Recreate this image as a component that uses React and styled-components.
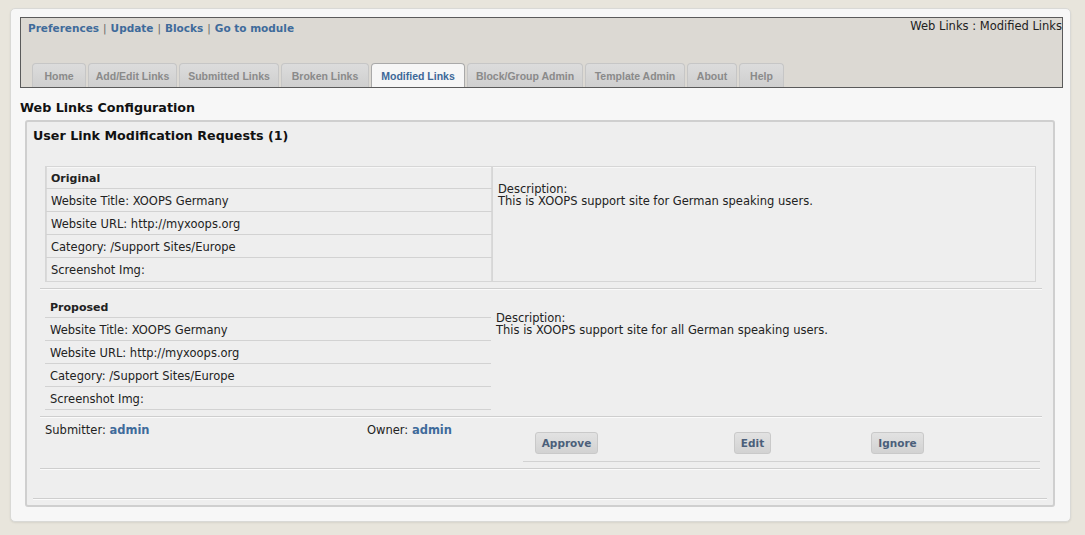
import React from "react";
import styled, { createGlobalStyle } from "styled-components";

const GlobalStyle = createGlobalStyle`
  body {
    margin: 0;
    background: #e8e5dc;
    font-family: "DejaVu Sans", Verdana, sans-serif;
    color: #222;
  }
`;

const Page = styled.div`
  padding: 8px 14px 13px 10px;
`;

const Shell = styled.div`
  width: 1061px;
  height: 514px;
  box-sizing: border-box;
  background: #f7f7f7;
  border: 1px solid #d9d9d6;
  border-radius: 5px;
  box-shadow: 0 1px 2px rgba(0, 0, 0, 0.08);
  padding: 8px 7px 0 9px;
`;

const Header = styled.div`
  width: 1043px;
  height: 71px;
  box-sizing: border-box;
  background: #dcd9d3;
  border: 1px solid #5a5a5a;
  display: flex;
  flex-direction: column;
  justify-content: space-between;
`;

const TopRow = styled.div`
  display: flex;
  justify-content: space-between;
  align-items: flex-start;
`;

const AdminLinks = styled.div`
  padding: 4px 0 0 7px;
  font-size: 10.5px;
  font-weight: bold;
  line-height: 13px;
  color: #555;
  a {
    color: #3f6b9b;
    text-decoration: none;
  }
`;

const Sep = styled.span`
  color: #666;
  font-weight: normal;
  margin: 0 4px;
`;

const Crumb = styled.div`
  padding-top: 2px;
  font-size: 11.5px;
  line-height: 13px;
  color: #222;
`;

const Tabs = styled.div`
  display: flex;
  gap: 2px;
  padding-left: 11px;
`;

const Tab = styled.div`
  width: ${(p) => p.$w}px;
  height: 24px;
  box-sizing: border-box;
  display: flex;
  align-items: center;
  justify-content: center;
  padding-top: 1px;
  font-family: "Liberation Sans", Arial, sans-serif;
  font-size: 10.5px;
  font-weight: bold;
  border: 1px solid ${(p) => (p.$active ? "#a9a9a9" : "#c6c6c6")};
  border-bottom: none;
  border-radius: 4px 4px 0 0;
  background: ${(p) =>
    p.$active ? "#f6f6f6" : "linear-gradient(#dcdcdc, #cfcfcf)"};
  color: ${(p) => (p.$active ? "#3d6898" : "#8a8a8a")};
`;

const PageTitle = styled.div`
  margin-top: 12px;
  font-size: 12.7px;
  font-weight: bold;
  line-height: 16px;
  color: #111;
`;

const Box = styled.div`
  margin: 4px 0 0 5px;
  width: 1030px;
  height: 387px;
  box-sizing: border-box;
  border: 2px solid #cfcfcf;
  border-radius: 3px;
  background: #eeeeee;
  display: flex;
  flex-direction: column;
`;

const BoxTitle = styled.div`
  padding: 6px 0 0 6px;
  font-size: 12.7px;
  font-weight: bold;
  line-height: 16px;
  color: #111;
`;

const Request = styled.div`
  margin: ${(p) => p.$top}px 17px 0 18px;
  display: grid;
  grid-template-columns: 446px 1fr;
  border: ${(p) => (p.$framed ? "1px solid #d6d6d6" : "none")};
  box-shadow: ${(p) => (p.$framed ? "inset 1px 1px 0 #f7f7f7" : "none")};
`;

const Fields = styled.div`
  display: flex;
  flex-direction: column;
`;

const Field = styled.div`
  height: ${(p) => (p.$head ? 22 : 23)}px;
  box-sizing: border-box;
  display: flex;
  align-items: center;
  padding: 1px 0 0 5px;
  font-size: ${(p) => (p.$head ? 11 : 11.5)}px;
  font-weight: ${(p) => (p.$head ? "bold" : "normal")};
  border-bottom: ${(p) => (p.$last && p.$framed ? "none" : "1px solid #d2d2d2")};
  box-shadow: ${(p) => (p.$framed ? "inset 1px 0 0 #dadada, inset -1px 0 0 #dadada" : "none")};
  color: #222;
`;

const Desc = styled.div`
  padding: 16px 0 0 5px;
  font-size: 11.5px;
  line-height: 12px;
  color: #222;
  border-left: ${(p) => (p.$framed ? "1px solid #d6d6d6" : "none")};
`;

const Rule = styled.div`
  margin: ${(p) => p.$top}px ${(p) => p.$r}px 0 ${(p) => p.$l}px;
  border-top: 1px solid #cecece;
  border-bottom: 1px solid #fafafa;
`;

const Footer = styled.div`
  margin: 0 13px 0 18px;
  display: grid;
  grid-template-columns: 322px 156px 1fr;
  font-size: 11.5px;
  color: #222;
`;

const Person = styled.div`
  padding-top: 6px;
  line-height: 13px;
  b {
    color: #3f6b9b;
  }
`;

const Actions = styled.div`
  display: grid;
  grid-template-columns: 199px 137px 1fr;
  padding: 14px 0 7px 12px;
  border-bottom: 1px solid #d2d2d2;
  align-items: start;
`;

const Button = styled.button`
  width: ${(p) => p.$w}px;
  height: 22px;
  padding: 0;
  justify-self: start;
  border: 1px solid #c9c9c9;
  border-radius: 3px;
  background: linear-gradient(#e2e2e2, #d2d2d2);
  font-family: "DejaVu Sans", Verdana, sans-serif;
  font-size: 10.5px;
  font-weight: bold;
  color: #4b5f7a;
`;

const tabs = [
  ["Home", 54],
  ["Add/Edit Links", 89],
  ["Submitted Links", 100],
  ["Broken Links", 88],
  ["Modified Links", 94],
  ["Block/Group Admin", 116],
  ["Template Admin", 100],
  ["About", 50],
  ["Help", 45],
];

const RequestBlock = ({ label, desc, framed, top }) => {
  const rows = [
    "Website Title: XOOPS Germany",
    "Website URL: http://myxoops.org",
    "Category: /Support Sites/Europe",
    "Screenshot Img:",
  ];
  return (
    <Request $framed={framed} $top={top}>
      <Fields>
        <Field $head $framed={framed}>{label}</Field>
        {rows.map((r, i) => (
          <Field key={r} $framed={framed} $last={i === rows.length - 1}>
            {r}
          </Field>
        ))}
      </Fields>
      <Desc $framed={framed}>
        Description:
        <br />
        {desc}
      </Desc>
    </Request>
  );
};

export default function App() {
  return (
    <>
      <GlobalStyle />
      <Page>
        <Shell>
          <Header>
            <TopRow>
              <AdminLinks>
                <a href="#">Preferences</a>
                <Sep>|</Sep>
                <a href="#">Update</a>
                <Sep>|</Sep>
                <a href="#">Blocks</a>
                <Sep>|</Sep>
                <a href="#">Go to module</a>
              </AdminLinks>
              <Crumb>Web Links : Modified Links</Crumb>
            </TopRow>
            <Tabs>
              {tabs.map(([name, w]) => (
                <Tab key={name} $w={w} $active={name === "Modified Links"}>
                  {name}
                </Tab>
              ))}
            </Tabs>
          </Header>
          <PageTitle>Web Links Configuration</PageTitle>
          <Box>
            <BoxTitle>User Link Modification Requests (1)</BoxTitle>
            <RequestBlock
              framed
              top={22}
              label="Original"
              desc="This is XOOPS support site for German speaking users."
            />
            <Rule $top={6} $l={13} $r={11} />
            <RequestBlock
              top={6}
              label="Proposed"
              desc="This is XOOPS support site for all German speaking users."
            />
            <Rule $top={6} $l={13} $r={11} />
            <Footer>
              <Person>
                Submitter: <b>admin</b>
              </Person>
              <Person>
                Owner: <b>admin</b>
              </Person>
              <Actions>
                <Button $w={63}>Approve</Button>
                <Button $w={37}>Edit</Button>
                <Button $w={53}>Ignore</Button>
              </Actions>
            </Footer>
            <Rule $top={6} $l={13} $r={13} />
            <Rule $top={28} $l={6} $r={6} />
          </Box>
        </Shell>
      </Page>
    </>
  );
}
